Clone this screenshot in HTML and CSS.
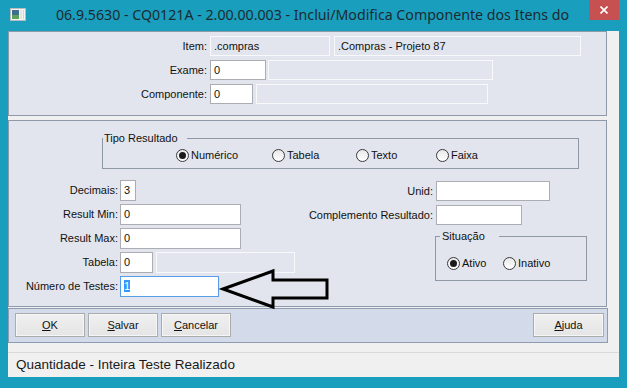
FILE: index.html
```html
<!DOCTYPE html>
<html lang="pt">
<head>
    <meta charset="UTF-8">
    <title>Inclui/Modifica Componente dos Itens do</title>
    <link rel="stylesheet" href="styles.css">
</head>
<body>
    <div class="window">
        <div class="titlebar">
            <svg class="app-icon" viewBox="0 0 16 13">
                <rect x="0.5" y="0.5" width="15" height="12" fill="#f4f4f4" stroke="#b9bcbf"/>
                <rect x="2" y="2" width="7" height="9" fill="#3f6f8a"/>
                <rect x="2" y="7" width="7" height="4" fill="#5fa15a"/>
                <rect x="10" y="2" width="2" height="9" fill="#dfe3e6"/>
                <rect x="13" y="2" width="1" height="9" fill="#cfd4d8"/>
            </svg>
            <div class="title">06.9.5630 - CQ0121A - 2.00.00.003 - Inclui/Modifica Componente dos Itens do</div>
            <button class="close" aria-label="Fechar">
                <svg viewBox="0 0 8 8" width="8" height="8">
                    <path d="M0.5 0.5 L7.5 7.5 M7.5 0.5 L0.5 7.5" stroke="#fff" stroke-width="1.6"/>
                </svg>
            </button>
        </div>

        <div class="client">
            <div class="content">
                <!-- Cabeçalho do item -->
                <section class="panel panel-top">
                    <div class="row">
                        <span class="lbl">Item:</span>
                        <span class="field disabled w-item">.compras</span>
                        <span class="field disabled w-item-desc gap-4">.Compras - Projeto 87</span>
                    </div>
                    <div class="row">
                        <span class="lbl">Exame:</span>
                        <span class="field w-exame">0</span>
                        <span class="field disabled w-exame-desc gap-2"></span>
                    </div>
                    <div class="row">
                        <span class="lbl">Componente:</span>
                        <span class="field w-comp">0</span>
                        <span class="field disabled w-comp-desc gap-3"></span>
                    </div>
                </section>

                <!-- Dados do componente -->
                <section class="panel panel-main">
                    <fieldset class="group tipo">
                        <legend>Tipo Resultado</legend>
                        <div class="radios">
                            <label class="radio r-num"><span class="dot checked"></span>Numérico</label>
                            <label class="radio r-tab"><span class="dot"></span>Tabela</label>
                            <label class="radio r-txt"><span class="dot"></span>Texto</label>
                            <label class="radio"><span class="dot"></span>Faixa</label>
                        </div>
                    </fieldset>

                    <div class="columns">
                        <div class="col-left">
                            <div class="row">
                                <span class="lbl">Decimais:</span>
                                <span class="field w-dec">3</span>
                            </div>
                            <div class="row">
                                <span class="lbl">Result Min:</span>
                                <span class="field w-result">0</span>
                            </div>
                            <div class="row">
                                <span class="lbl">Result Max:</span>
                                <span class="field w-result">0</span>
                            </div>
                            <div class="row">
                                <span class="lbl">Tabela:</span>
                                <span class="field w-tab">0</span>
                                <span class="field disabled w-tab-desc gap-3"></span>
                            </div>
                            <div class="row">
                                <span class="lbl">Número de Testes:</span>
                                <span class="field focus w-testes"><span class="sel">1</span></span>
                            </div>
                        </div>

                        <div class="col-right">
                            <div class="row">
                                <span class="lbl">Unid:</span>
                                <span class="field w-unid"></span>
                            </div>
                            <div class="row">
                                <span class="lbl">Complemento Resultado:</span>
                                <span class="field w-compl"></span>
                            </div>
                            <fieldset class="group situacao">
                                <legend>Situação</legend>
                                <div class="radios">
                                    <label class="radio r-ativo"><span class="dot checked"></span>Ativo</label>
                                    <label class="radio"><span class="dot"></span>Inativo</label>
                                </div>
                            </fieldset>
                        </div>
                    </div>
                </section>

                <div class="buttonbar">
                    <button class="btn"><u>O</u>K</button>
                    <button class="btn"><u>S</u>alvar</button>
                    <button class="btn"><u>C</u>ancelar</button>
                    <button class="btn btn-help"><u>A</u>juda</button>
                </div>
            </div>

            <div class="status">
                <div class="status-text">Quantidade - Inteira Teste Realizado</div>
            </div>
        </div>

        <!-- Seta de destaque -->
        <svg class="arrow" viewBox="0 0 114 46">
            <path d="M5 23 L55 5 L55 14 L109 14 L109 32 L55 32 L55 41 Z" fill="none" stroke="#000" stroke-width="3" stroke-linejoin="miter"/>
        </svg>
    </div>
</body>
</html>
```

FILE: styles.css
```css
/* Base */
* {
    margin: 0;
    padding: 0;
    box-sizing: border-box;
}

body {
    width: 627px;
    height: 388px;
    overflow: hidden;
    background: #1a9ebe;
    font-family: "Liberation Sans", Arial, sans-serif;
    font-size: 11px;
    color: #111;
}

.window {
    position: relative;
    height: 388px;
}

/* Barra de título */
.titlebar {
    display: flex;
    height: 31px;
}

.app-icon {
    width: 16px;
    height: 13px;
    margin: 8px 0 0 10px;
    flex-shrink: 0;
}

.title {
    flex: 1;
    padding-left: 10px;
    text-align: center;
    font-family: "Noto Sans", sans-serif;
    font-size: 14.2px;
    line-height: 30px;
    color: #1b2b30;
    white-space: nowrap;
    overflow: hidden;
}

.close {
    width: 30px;
    height: 20px;
    margin-right: 8px;
    background: #c75050;
    border: none;
    display: flex;
    align-items: center;
    justify-content: center;
    flex-shrink: 0;
}

/* Área cliente */
.client {
    margin: 0 8px;
    height: 346px;
    background: #f0f0f0;
    display: flex;
    flex-direction: column;
}

.content {
    width: 600px;
}

.panel {
    width: 599px;
    background: #e2e5ed;
    border: 1px solid #8f9aa8;
}

.panel-top {
    height: 85px;
    padding-top: 4px;
    display: flex;
    flex-direction: column;
    gap: 4px;
}

.row {
    display: flex;
    align-items: stretch;
    height: 20px;
}

.lbl {
    text-align: right;
    white-space: nowrap;
    line-height: 20px;
}

.panel-top .lbl {
    width: 201px;
    padding-right: 3px;
}

.field {
    border: 1px solid #abadb3;
    background: #fff;
    padding-left: 3px;
    line-height: 18px;
    white-space: nowrap;
    overflow: hidden;
}

.field.disabled {
    background: transparent;
    border-color: #f8f9fb;
}

.field.focus {
    border-color: #569de5;
}

.sel {
    background: #3399ff;
    color: #fff;
}

.gap-2 { margin-left: 2px; }
.gap-3 { margin-left: 3px; }
.gap-4 { margin-left: 4px; }

.w-item { width: 120px; }
.w-item-desc { width: 247px; }
.w-exame { width: 56px; }
.w-exame-desc { width: 225px; }
.w-comp { width: 43px; }
.w-comp-desc { width: 232px; }

/* Painel principal */
.panel-main {
    margin-top: 4px;
    height: 187px;
    padding-top: 11px;
}

.group {
    border: 1px solid #8f99a6;
    min-width: 0;
}

.group legend {
    line-height: 13px;
}

.tipo {
    margin-left: 93px;
    width: 477px;
}

.tipo legend {
    padding: 0 9px 0 1px;
}

.radios {
    display: flex;
}

.tipo .radios {
    padding: 3px 0 6px 73px;
}

.radio {
    display: flex;
    align-items: center;
    gap: 2px;
    line-height: 14px;
}

.r-num { width: 96px; }
.r-tab { width: 84px; }
.r-txt { width: 80px; }
.r-ativo { width: 56px; }

.dot {
    position: relative;
    width: 13px;
    height: 13px;
    border: 1px solid #3a3a3a;
    border-radius: 50%;
    background: linear-gradient(#e8e8e8, #ffffff);
}

.dot.checked::after {
    content: "";
    position: absolute;
    left: 2px;
    top: 2px;
    width: 7px;
    height: 7px;
    border-radius: 50%;
    background: #1a1a1a;
}

.columns {
    display: flex;
    margin-top: 11px;
}

.col-left {
    width: 291px;
    display: flex;
    flex-direction: column;
    gap: 3px;
}

.col-left .row {
    height: 21px;
}

.col-left .lbl {
    width: 111px;
    padding-right: 2px;
    line-height: 21px;
}

.col-left .field {
    line-height: 19px;
}

.w-dec { width: 16px; }
.w-result { width: 121px; }
.w-tab { width: 33px; }
.w-tab-desc { width: 139px; }
.w-testes { width: 99px; }

.col-right {
    padding-top: 1px;
    display: flex;
    flex-direction: column;
    gap: 4px;
}

.col-right .lbl {
    width: 136px;
    padding-right: 3px;
}

.w-unid { width: 114px; }
.w-compl { width: 86px; }

.situacao {
    margin: 1px 0 0 135px;
    width: 152px;
}

.situacao legend {
    margin-left: 4px;
    padding: 0 14px 0 2px;
}

.situacao .radios {
    padding: 13px 0 10px 11px;
}

/* Barra de botões */
.buttonbar {
    margin-top: 1px;
    height: 35px;
    border: 1px solid #8e9bb0;
    background: #d3dbea;
    display: flex;
    gap: 3px;
    padding: 4px 3px 0 6px;
}

.btn {
    width: 70px;
    height: 24px;
    font: inherit;
    color: #111;
    border: 1px solid #acacac;
    background: linear-gradient(#f0f0f0, #e5e5e5);
    box-shadow: inset 0 0 0 1px #f6f6f6;
}

.btn-help {
    margin-left: auto;
    width: 71px;
}

/* Barra de status */
.status {
    margin-top: auto;
    padding-top: 9px;
}

.status-text {
    border-top: 1px solid #dadada;
    line-height: 24px;
    padding-left: 8px;
    font-size: 13.5px;
    color: #1a1a1a;
}

/* Seta */
.arrow {
    position: absolute;
    left: 218px;
    top: 266px;
    width: 114px;
    height: 46px;
}
```
